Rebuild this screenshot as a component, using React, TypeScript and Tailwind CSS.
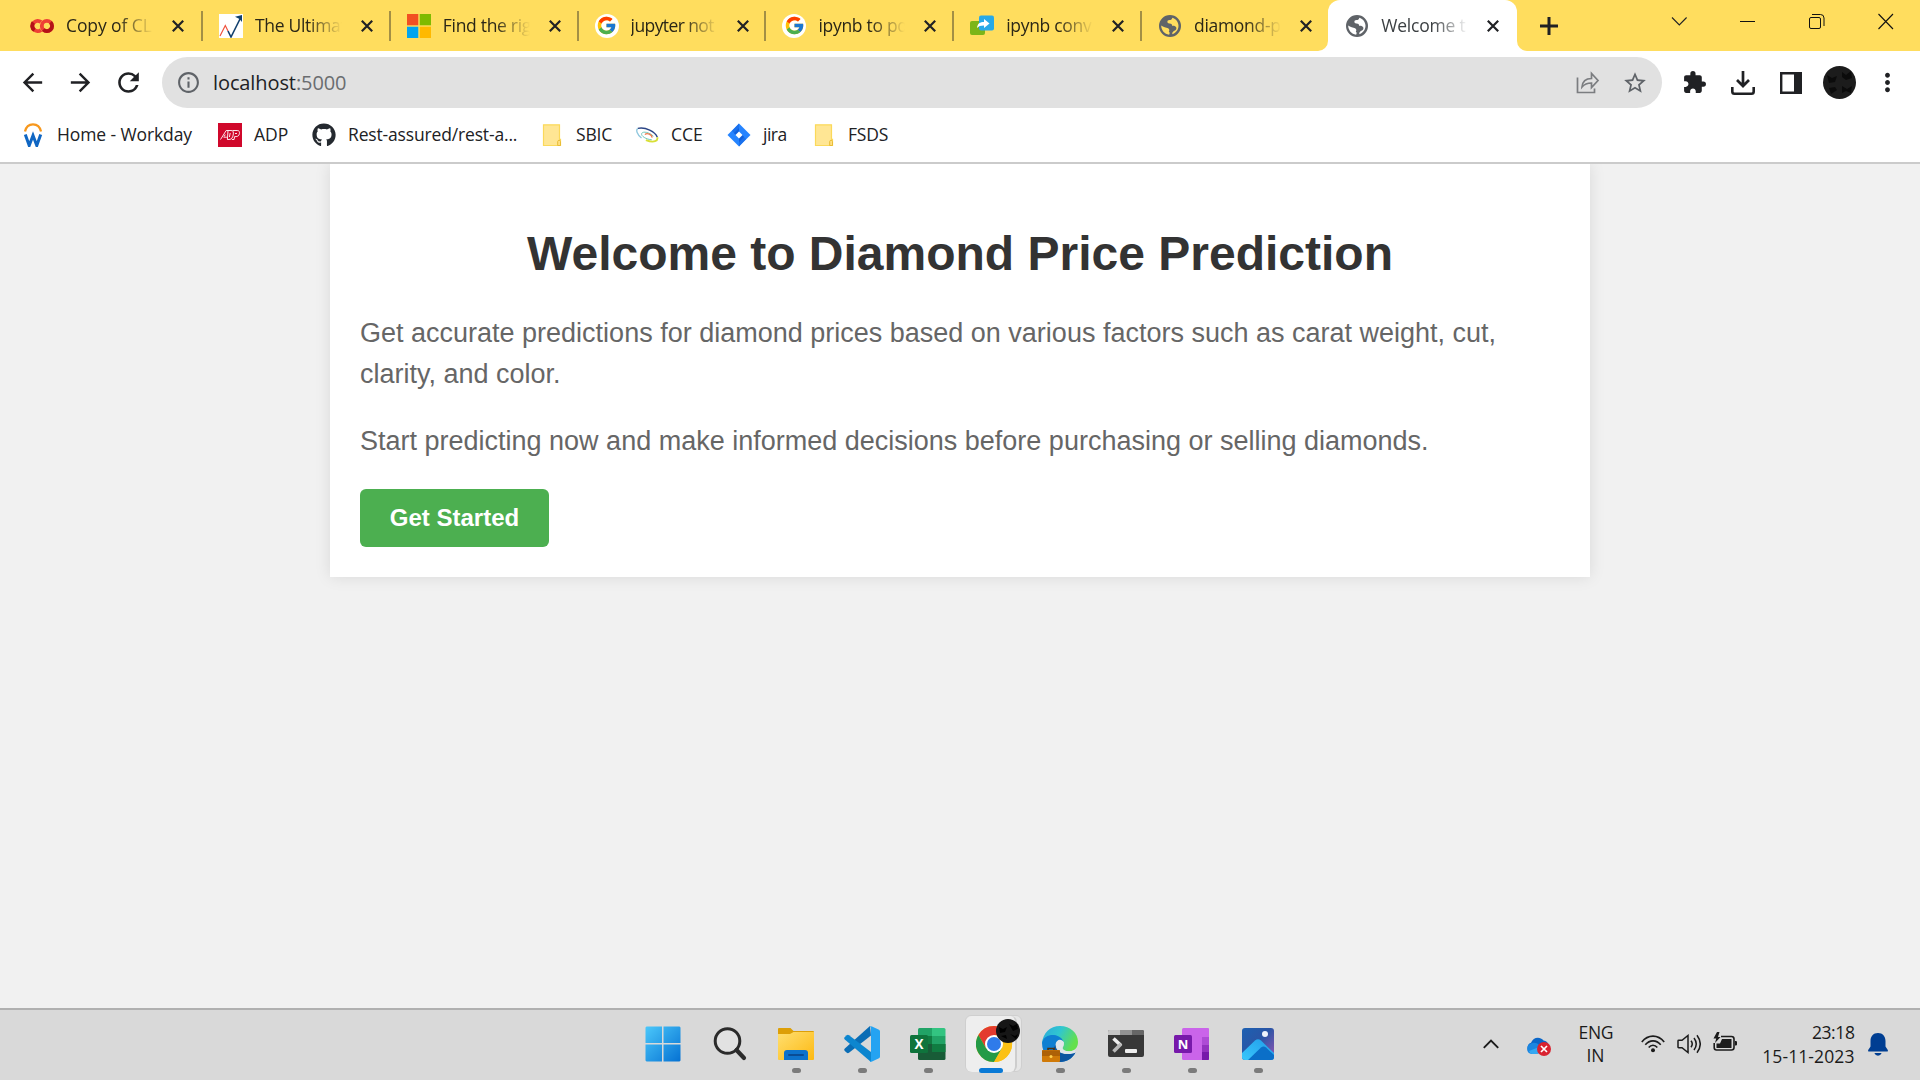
import type { ReactNode } from 'react';
import { FaGithub } from 'react-icons/fa';
import { FcGoogle } from 'react-icons/fc';
import {
  MdArrowBack,
  MdArrowForward,
  MdExtension,
  MdInfoOutline,
  MdMoreVert,
  MdRefresh,
  MdStarBorder,
} from 'react-icons/md';

/* ---------- favicons ---------- */

function ColabIcon() {
  return (
    <svg viewBox="0 0 24 24" className="size-6">
      <g fill="none" strokeWidth="3.900">
        <path d="M11 8.100A5.100 5.100 0 1 0 11 15.900" stroke="#ee4035" />
        <path d="M3.400 8.600A5.100 5.100 0 0 0 4.500 16.200" stroke="#b41217" />
        <circle cx="16.900" cy="12" r="5.100" stroke="#ee4035" />
        <path d="M20.500 8.300A5.100 5.100 0 0 1 13.300 15.600" stroke="#b41217" />
      </g>
    </svg>
  );
}

function TrendIcon() {
  return (
    <svg viewBox="0 0 24 24" className="size-6">
      <path d="M0 0h24v24H0z" fill="#fff" />
      <path d="M1 22L6.300 11.500 9 17" fill="none" stroke="#f0523d" strokeWidth="1.200" />
      <path d="M9 17l3 6L21.500 4" fill="none" stroke="#12406e" strokeWidth="1.600" />
      <path d="M16 2.800L23 1v7l-2.500-3z" fill="#12406e" />
    </svg>
  );
}

function MicrosoftIcon() {
  return (
    <svg viewBox="0 0 24 24" className="size-6">
      <path d="M0 0h11.300v11.300H0z" fill="#f25022" />
      <path d="M12.700 0H24v11.300H12.700z" fill="#7fba00" />
      <path d="M0 12.700h11.300V24H0z" fill="#00a4ef" />
      <path d="M12.700 12.700H24V24H12.700z" fill="#ffb900" />
    </svg>
  );
}

function GoogleIcon() {
  return (
    <span className="flex size-6 items-center justify-center rounded-full bg-white">
      <FcGoogle className="size-[21px]" />
    </span>
  );
}

function ConvertIcon() {
  return (
    <svg viewBox="0 0 24 24" className="size-6">
      <rect x="0" y="7" width="15" height="14" rx="2" fill="#7cb518" />
      <rect x="9" y="1.500" width="15" height="15" rx="2" fill="#27a9e8" />
      <path d="M7 14c.5-4.500 3-6 7-6V5l5.500 4.500L14 14v-2.500c-3.500 0-5.500.8-7 2.500z" fill="#fff" />
    </svg>
  );
}

function GlobeIcon() {
  return (
    <svg viewBox="0 0 24 24" className="size-6">
      <path
        fillRule="evenodd"
        fill="#5f6368"
        d="M12 1a11 11 0 1 1 0 22 11 11 0 0 1 0-22zM14.300 3.700c-.2 1.500-1.200 2.300-2.800 2.400-1.500.1-2.200.8-2.100 2 .1 1 .8 1.400 2.200 1.300 1.800 0 2.400.8 2.500 2.300 1.900-.2 3.600.2 4.200 1.700.4 1.100-.2 2.400-1.400 3.200-1.400.9-2.600 1-2.700 3.700 3.700-1.200 6.300-4.500 6.300-8.500 0-3.700-2.500-7-6.200-8.100zM3.200 11.500c0 4.700 3.400 8.600 7.900 9.200.8-1.200.7-2.300-.3-3.200.9-1.100.6-2.500-.7-3.300-1.900-1-4.800-.7-6.900-2.700z"
      />
    </svg>
  );
}

/* ---------- bookmark icons ---------- */

function WorkdayIcon() {
  return (
    <svg viewBox="0 0 24 24" className="size-6">
      <path d="M4 8.500C5 4 8 1.300 12 1.300S19 4 20 8.500" fill="none" stroke="#f7981d" strokeWidth="2.300" />
      <path d="M4.300 11.500L8.200 22.500 12 12.500l3.800 10 3.900-11" fill="none" stroke="#0f66c3" strokeWidth="3" />
    </svg>
  );
}

function AdpIcon() {
  return (
    <svg viewBox="0 0 24 24" className="size-6">
      <path d="M0 0h24v24H0z" fill="#d0082b" />
      <g fill="none" stroke="#fff" strokeWidth=".9">
        <path d="M2.500 16.500L8.200 7.500h1.800l-.6 9M5.500 14.200h3.400M7.200 11.500l-1 2" />
        <path d="M10 7.500h3c2.300 0 2.700 1.700 2.200 4.500s-1.900 4.500-4.200 4.500h-1.700M12.200 10l-.8 4" />
        <path d="M14.500 7.500h4.700c2 0 2.600 1.300 2.200 3.200s-1.500 2.900-3.300 2.900h-1.500l-.5 2.900h-2.300M17 10.500h2" />
      </g>
    </svg>
  );
}

function FolderIcon() {
  return (
    <svg viewBox="0 0 24 24" className="size-6">
      <path d="M3.500 1.800h16v14.500h1V22.500H3.500z" fill="#ffe694" stroke="#fbd95a" strokeWidth="1.200" />
      <path d="M17.700 22.500v-4c0-1.600 2.800-1.600 2.800 0v4z" fill="#ffe083" stroke="#e9bc36" strokeWidth="1" />
    </svg>
  );
}

function CceIcon() {
  return (
    <svg viewBox="0 0 24 24" className="size-6">
      <g fill="none" transform="rotate(18 12 12)">
        <path d="M22.500 11C19 6.500 8 4.500 1.200 8.600" stroke="#2b4586" strokeWidth="1.400" />
        <path d="M1.200 8.600c-1.500 2 .5 5.500 6.500 7.900" stroke="#8fc7de" strokeWidth="1.300" />
        <path d="M22.500 11c2 3-1 6.700-10 6.200" stroke="#d8df36" strokeWidth="1.800" />
        <path d="M18 15c-5 1.500-12 0-11.500-3 .5-2.500 7-3.500 12-.8" stroke="#62bfb1" strokeWidth=".8" />
        <path d="M17.500 13c-.5-3-6.500-3.500-7.500-.7" stroke="#ee7d50" strokeWidth="1.400" />
      </g>
    </svg>
  );
}

function JiraIcon() {
  return (
    <svg viewBox="0 0 24 24" className="size-6">
      <path d="M12 .5L23.500 12 12 23.500.5 12z" fill="#2684ff" />
      <path d="M12 .5V9l-3 3-4-4zM12 23.500V15l3-3 4 4z" fill="#1a70ec" />
      <path d="M12 5v4l-3 3-2-2zM12 19v-4l3-3 2 2z" fill="#0f5fdc" />
      <path d="M12 8.500l3.500 3.500-3.500 3.500L8.500 12z" fill="#fff" />
    </svg>
  );
}

/* ---------- tab strip ---------- */

function CloseGlyph() {
  return (
    <svg viewBox="0 0 12 12" className="size-3 shrink-0">
      <path d="M.8.8l10.400 10.400M11.200.8L.8 11.200" stroke="#202124" strokeWidth="2.200" />
    </svg>
  );
}

type TabData = { title: string; icon: ReactNode; tracking: string };

const tabs: TabData[] = [
  { title: 'The Ultimat', icon: <TrendIcon />, tracking: 'tracking-[-0.3px]' },
  { title: 'Find the rig', icon: <MicrosoftIcon />, tracking: 'tracking-[-0.3px]' },
  { title: 'jupyter not', icon: <GoogleIcon />, tracking: 'tracking-[-0.6px]' },
  { title: 'ipynb to pd', icon: <GoogleIcon />, tracking: 'tracking-[-0.3px]' },
  { title: 'ipynb conv', icon: <ConvertIcon />, tracking: 'tracking-[-0.3px]' },
  { title: 'diamond-p', icon: <GlobeIcon />, tracking: 'tracking-[-0.3px]' },
];

function TabBody({ title, icon, tracking }: TabData) {
  return (
    <>
      <span className="mr-3 size-6 shrink-0">{icon}</span>
      <span
        className={`w-[87px] shrink-0 overflow-hidden whitespace-nowrap mask-r-from-60% mask-r-to-100% ${tracking}`}
      >
        {title}
      </span>
      <span className="ml-[19px] flex shrink-0">
        <CloseGlyph />
      </span>
    </>
  );
}

function TabStrip() {
  return (
    <div className="flex h-[51px] bg-[#ffdd5e] text-[17.5px] text-[#2b2717]">
      <div className="flex w-[201px] items-center pl-[30px]">
        <TabBody title="Copy of CL" icon={<ColabIcon />} tracking="tracking-[-0.1px]" />
      </div>
      {tabs.map((tab) => (
        <div key={tab.title} className="flex w-[187.800px] items-center">
          <span className="mt-px h-[30px] w-[2px] bg-[#a38f45]" />
          <div className="flex items-center pl-4">
            <TabBody {...tab} />
          </div>
        </div>
      ))}
      <div className="flex items-end">
        <svg viewBox="0 0 10 10" className="-ml-2.5 size-2.5">
          <path d="M10 0v10H0A10 10 0 0 0 10 0z" fill="#fff" />
        </svg>
      </div>
      <div className="flex h-full w-[189px] items-center rounded-t-[12px] bg-white pl-[17.500px] text-[#3c4043]">
        <TabBody title="Welcome t" icon={<GlobeIcon />} tracking="tracking-[-0.2px]" />
      </div>
      <div className="flex items-end">
        <svg viewBox="0 0 10 10" className="size-2.5">
          <path d="M0 0v10h10A10 10 0 0 1 0 0z" fill="#fff" />
        </svg>
      </div>
      <svg viewBox="0 0 18 18" className="mt-[16.500px] ml-[13.500px] size-[18px]">
        <path d="M9 0v18M0 9h18" stroke="#202124" strokeWidth="3" />
      </svg>
      <div className="-mr-px ml-auto flex">
        <svg viewBox="0 0 69 43" className="h-[43px] w-[69px]">
          <path d="M27 17.500l7.300 7.500 7.300-7.500" fill="none" stroke="#202124" strokeWidth="1.100" />
        </svg>
        <svg viewBox="0 0 69 43" className="h-[43px] w-[69px]" shapeRendering="crispEdges">
          <path d="M26 21.500h15" stroke="#111" />
        </svg>
        <svg viewBox="0 0 69 43" className="h-[43px] w-[69px]">
          <rect x="26.500" y="17.500" width="11" height="11" rx="1.500" fill="none" stroke="#111" />
          <path d="M29 14.500h8.500a3.500 3.500 0 0 1 3.500 3.500v8" fill="none" stroke="#111" />
        </svg>
        <svg viewBox="0 0 69 43" className="h-[43px] w-[69px]">
          <path d="M26.500 14l14.500 15M41 14L26.500 29" stroke="#111" strokeWidth="1.100" />
        </svg>
      </div>
    </div>
  );
}

/* ---------- toolbar ---------- */

function Toolbar() {
  return (
    <div className="flex h-[57px] items-center pt-1.5 text-[#202124]">
      <MdArrowBack className="ml-[18px] size-[29px]" />
      <MdArrowForward className="ml-[19px] size-[29px]" />
      <MdRefresh className="ml-[18px] size-[31px]" />
      <div className="ml-[18px] flex h-[51px] w-[1500px] items-center rounded-full bg-[#e1e1e1]">
        <MdInfoOutline className="ml-[14px] size-[25px] text-[#5f6368]" />
        <span className="ml-[12px] text-[20px] tracking-[-0.1px]">
          localhost<span className="text-[#6a6d70]">:5000</span>
        </span>
        <svg
          viewBox="0 0 26 26"
          className="mr-[22px] ml-auto size-[26px]"
          fill="none"
          stroke="#7b7d80"
          strokeWidth="1.700"
        >
          <path d="M3.500 7.500v15h17v-4" />
          <path d="M8 17c.5-6 4-8.500 9.500-8.500V3.500l6.500 7-6.500 7V13c-4.500 0-7 1-9.500 4z" />
        </svg>
        <MdStarBorder className="mr-[14px] size-[26px] text-[#5f6368]" />
      </div>
      <MdExtension className="ml-[20px] size-[25px]" />
      <svg viewBox="0 0 24 24" className="ml-[24px] size-6" fill="none" stroke="#202124">
        <path d="M12 0v15M6 9l6 6 6-6" strokeWidth="2.700" />
        <path d="M1.300 16v4.500q0 2.200 2.200 2.200h17q2.200 0 2.200-2.200V16" strokeWidth="2.600" />
      </svg>
      <svg viewBox="0 0 22 22" className="ml-[25px] size-[22px]">
        <path d="M1.200 1.200h19.600v19.600H1.200z" fill="#fff" stroke="#202124" strokeWidth="2.400" />
        <path d="M14 0h8v22h-8z" fill="#202124" />
      </svg>
      <svg viewBox="0 0 33 33" className="ml-[21px] size-[33px]">
        <circle cx="16.500" cy="16.500" r="16.500" fill="#1c1c1c" />
        <path
          d="M4 9l5 3 5-2-2 6-6 1zM19 6l4 3 5-4 1 7-6 2-4-3zM6 22l6-1 2 3-6 4zM19 20l5 3 5-3-1 7-5-2-4 2z"
          fill="#0b0b0b"
        />
      </svg>
      <MdMoreVert className="ml-[16.500px] size-[29px]" />
    </div>
  );
}

/* ---------- bookmarks ---------- */

function Bookmark({ icon, children }: { icon: ReactNode; children: ReactNode }) {
  return (
    <div className="flex items-center gap-3 whitespace-nowrap">
      <span className="size-6">{icon}</span>
      {children}
    </div>
  );
}

function Bookmarks() {
  return (
    <div className="flex h-[56px] items-center border-b-2 border-[#cbcbcb] pl-[21px] text-[17.5px] text-[#202124]">
      <Bookmark icon={<WorkdayIcon />}>
        <span className="-mt-px w-[161px] tracking-[-0.1px]">Home - Workday</span>
      </Bookmark>
      <Bookmark icon={<AdpIcon />}>
        <span className="-mt-px w-[58px]">ADP</span>
      </Bookmark>
      <Bookmark icon={<FaGithub className="size-6 text-[#24292f]" />}>
        <span className="-mt-px w-[192px] tracking-[-0.16px]">Rest-assured/rest-a...</span>
      </Bookmark>
      <Bookmark icon={<FolderIcon />}>
        <span className="-mt-px w-[59px] tracking-[-0.2px]">SBIC</span>
      </Bookmark>
      <Bookmark icon={<CceIcon />}>
        <span className="-mt-px w-[56px]">CCE</span>
      </Bookmark>
      <Bookmark icon={<JiraIcon />}>
        <span className="-mt-px w-[49px] tracking-[-0.5px]">jira</span>
      </Bookmark>
      <Bookmark icon={<FolderIcon />}>
        <span className="-mt-px tracking-[-0.2px]">FSDS</span>
      </Bookmark>
    </div>
  );
}

/* ---------- page ---------- */

function Page() {
  return (
    <div className="h-[844px] overflow-hidden bg-[#f1f1f1] font-['Liberation_Sans',sans-serif]">
      <div className="mx-auto h-[413px] w-[1260px] bg-white px-[30px] pt-[63px] shadow-[0_0_15px_rgba(0,0,0,0.1)]">
        <h1 className="text-center text-[48px] leading-[54px] font-bold text-[#333]">
          Welcome to Diamond Price Prediction
        </h1>
        <p className="mt-8 text-[27px] leading-[40.500px] font-normal text-[#666]">
          Get accurate predictions for diamond prices based on various factors such as carat weight, cut, clarity, and
          color.
        </p>
        <p className="mt-[27px] text-[27px] leading-[40.500px] font-normal text-[#666]">
          Start predicting now and make informed decisions before purchasing or selling diamonds.
        </p>
        <button className="mt-[27px] flex h-[58px] w-[189px] items-center justify-center rounded-[6px] bg-[#4caf50] text-2xl font-bold text-white">
          Get Started
        </button>
      </div>
    </div>
  );
}

/* ---------- taskbar ---------- */

function StartIcon() {
  return (
    <svg viewBox="0 0 36 36" className="ml-px size-9">
      <defs>
        <linearGradient id="start" x1="0" y1="0" x2="36" y2="36" gradientUnits="userSpaceOnUse">
          <stop stopColor="#4cc9fb" />
          <stop offset="1" stopColor="#0470d2" />
        </linearGradient>
      </defs>
      <path
        d="M1.500.5h15.500v16.500H.5V1.500zM18.500.5h16l1 1V17h-17zM.5 18.500h16.500v17H1.500l-1-1zM18.500 18.500h17v16l-1 1h-16z"
        fill="url(#start)"
      />
    </svg>
  );
}

function SearchIcon() {
  return (
    <svg viewBox="0 0 36 36" className="ml-1 size-9" fill="none" stroke="#2b2b2b">
      <circle cx="15.500" cy="15" r="12.300" strokeWidth="3" fill="#e2e2e2" />
      <path d="M24.500 24l7.500 8" strokeWidth="4.200" strokeLinecap="round" />
    </svg>
  );
}

function ExplorerIcon() {
  return (
    <svg viewBox="0 0 36 36" className="size-9">
      <defs>
        <linearGradient id="folder" x1="0" y1="0" x2="1" y2="1">
          <stop stopColor="#ffdf70" />
          <stop offset="1" stopColor="#fdb912" />
        </linearGradient>
      </defs>
      <path d="M0 3q0-1 1-1h11.500l3 3H35q1 0 1 1v10H0z" fill="#dd9f07" />
      <path d="M0 8h12l3.500-2H36v27q0 1-1 1H1q-1 0-1-1z" fill="url(#folder)" />
      <path d="M6 34v-7q0-3 3-3h18q3 0 3 3v7z" fill="#0d72cb" />
      <path d="M11 29h14" stroke="#0a4c94" strokeWidth="2" strokeLinecap="round" />
    </svg>
  );
}

function VsCodeIcon() {
  return (
    <svg viewBox="0 0 36 36" className="size-9">
      <path d="M26 0L.8 22.500q-1.200 1.300 0 2.500l2 1.800q1 .8 2.200 0L27 9.500z" fill="#0a6db5" />
      <path d="M27 36L.8 13.500q-1.200-1.300 0-2.500l2-1.800q1-.8 2.200 0L27 26z" fill="#0d86cf" />
      <path d="M26 .3Q27 0 28 .5l7 3.300q1 .5 1 1.700v25q0 1.200-1 1.700l-7 3.400q-1 .5-2 .2l1-1.500V2z" fill="#24a3f2" />
    </svg>
  );
}

function ExcelIcon() {
  return (
    <svg viewBox="0 0 36 36" className="size-9">
      <path d="M8 3.500Q8 2 9.500 2H22v8H8z" fill="#21a366" />
      <path d="M22 2h12q1.500 0 1.500 1.500V10H22z" fill="#33c481" />
      <path d="M8 10h14v8H8z" fill="#107c41" />
      <path d="M22 10h13.500v8H22z" fill="#21a366" />
      <path d="M8 18h27.500v14.500q0 1.500-1.500 1.500H9.500Q8 34 8 32.500z" fill="#185c37" />
      <path d="M22 18h13.500v8H22z" fill="#107c41" />
      <rect y="9" width="18" height="18" rx="1.500" fill="#0f743c" />
      <text x="9" y="22.800" textAnchor="middle" fontSize="13.500" fontWeight="700" fill="#fff">
        X
      </text>
    </svg>
  );
}

function ChromeIcon() {
  return (
    <svg viewBox="0 0 48 44" className="ml-3 h-11 w-12">
      <g transform="translate(0 8)">
        <circle cx="18" cy="18" r="18" fill="#fbc116" />
        <path d="M2.400 9A18 18 0 0 1 33.600 9L18 10 10.200 22.500z" fill="#e33b2e" />
        <path d="M2.400 9A18 18 0 0 0 18 36l7.800-13.500L18 18l-7.800 4.500z" fill="#249a47" />
        <path d="M33.600 9H18l7.800 13.500L18 36A18 18 0 0 0 33.600 9z" fill="#fbc116" />
        <circle cx="18" cy="18" r="9" fill="#fff" />
        <circle cx="18" cy="18" r="7" fill="#2f7bea" />
      </g>
      <circle cx="32" cy="13" r="12" fill="#161616" />
      <path d="M23 9l4 2 4-2-2 5-5 1zM33 6l4 2 4-2 1 5-5 2zM25 18l5-1 1 4zM34 16l5 2 3-2-2 5z" fill="#000" />
    </svg>
  );
}

function EdgeIcon() {
  return (
    <svg viewBox="0 0 36 36" className="size-9">
      <defs>
        <linearGradient id="edge" x1="0" y1="0" x2="1" y2=".4">
          <stop stopColor="#2aa8dc" />
          <stop offset=".5" stopColor="#30c6d0" />
          <stop offset="1" stopColor="#63e04d" />
        </linearGradient>
      </defs>
      <path
        d="M0 17C1 7 8 0 18 0c10.500 0 18 7 18 16 0 6-4 9.500-9.500 9.500-4.500 0-6.500-2-6-3.500 2-2.500 2-6-1.500-7.500z"
        fill="url(#edge)"
      />
      <path
        d="M0 17C1 11 7 8.500 12 9c5 .5 9.500 4 9.500 8-2-3.500-8-3-8 2 0 7.500 9 12 20 7.500C30 32.500 25 36 18 36 8 36 0 28 0 17z"
        fill="#0f7fd2"
      />
      <path d="M13.500 19c0 7.500 9 11.500 20 7.500C30 32.500 25 36 18 36c-5-1-9-7-7-13z" fill="#0c55a0" />
      <path d="M14 18c0-5 6-6 8-1.500 0 2.500-1.500 4-1.500 5.500.5 3 6.500 4.500 12.500 2l.5 2.500C24 30.500 14 26 14 18z" fill="#e0e6ea" />
      <rect y="24" width="18" height="12" rx="1" fill="#d07a08" />
      <path d="M0 24.500h18V30H0z" fill="#ad6107" />
      <path d="M6 24v-1.500h6V24" fill="none" stroke="#4c2f10" strokeWidth="1.500" />
      <circle cx="9" cy="30.500" r="1.500" fill="#ffcf4d" />
    </svg>
  );
}

function TerminalIcon() {
  return (
    <svg viewBox="0 0 36 36" className="size-9">
      <rect y="4" width="36" height="27" rx="2" fill="#383838" />
      <path d="M0 9V5.500Q0 4 1.500 4H12v5z" fill="#c6c6c6" />
      <path d="M12 4h12v5H12z" fill="#929292" />
      <path d="M24 4h10.500Q36 4 36 5.500V9H24z" fill="#666" />
      <path d="M5.500 12.500l7.500 7" stroke="#eee" strokeWidth="3.600" />
      <path d="M13 18l-7.500 7.500" stroke="#b9b9b9" strokeWidth="3.600" />
      <rect x="17" y="23" width="12" height="4" rx="1" fill="#eee" />
    </svg>
  );
}

function OneNoteIcon() {
  return (
    <svg viewBox="0 0 36 36" className="size-9">
      <path d="M8 3.500Q8 2 9.500 2H34q1 0 1 1v31H9.500Q8 34 8 32.500z" fill="#ca64ea" />
      <path d="M28 11h7v8h-7z" fill="#ae4bd5" />
      <path d="M28 19h7v7h-7z" fill="#9332bf" />
      <path d="M28 26h7v7q0 1-1 1h-6z" fill="#7719aa" />
      <rect y="9" width="18" height="18" rx="1.500" fill="#7719aa" />
      <text x="9" y="22.800" textAnchor="middle" fontSize="13" fontWeight="700" fill="#fff">
        N
      </text>
    </svg>
  );
}

function PhotosIcon() {
  return (
    <svg viewBox="0 0 36 36" className="size-9">
      <defs>
        <linearGradient id="sky" x1="0" y1="0" x2="1" y2=".9">
          <stop stopColor="#1b62b4" />
          <stop offset=".5" stopColor="#2a55a5" />
          <stop offset="1" stopColor="#9a55b4" />
        </linearGradient>
        <linearGradient id="hill" x1="0" y1="1" x2="1" y2="0">
          <stop stopColor="#3ccbfd" />
          <stop offset="1" stopColor="#1f9ae8" />
        </linearGradient>
        <clipPath id="photo">
          <rect x="2" y="2" width="32" height="32" rx="3" />
        </clipPath>
      </defs>
      <g clipPath="url(#photo)">
        <path d="M0 0h36v36H0z" fill="url(#sky)" />
        <path d="M0 29L15 14.500q3-2.500 6 0L36 29v7H0z" fill="url(#hill)" />
        <path d="M6 36l15-14.500q2.500-2 5 0L36 31v5z" fill="#0b6fc8" />
      </g>
      <circle cx="25" cy="8" r="3" fill="#eef3fb" />
    </svg>
  );
}

function TaskItem({ icon, running = false }: { icon: ReactNode; running?: boolean }) {
  return (
    <div className="flex h-full w-[66px] flex-col items-center pt-4">
      {icon}
      {running && <span className="mt-1.5 h-[5px] w-[9px] rounded-full bg-[#7b7b7b]" />}
    </div>
  );
}

function Taskbar() {
  return (
    <div className="flex h-[72px] border-t-2 border-[#b0b0b0] bg-[#d9d9d9] text-[17.5px] text-[#1b1b1b]">
      <div className="flex pl-[629px]">
        <div className="mr-0.5 flex">
          <TaskItem icon={<StartIcon />} />
          <TaskItem icon={<SearchIcon />} />
        </div>
        <TaskItem icon={<ExplorerIcon />} running />
        <TaskItem icon={<VsCodeIcon />} running />
        <TaskItem icon={<ExcelIcon />} running />
        <div className="flex w-[66px] pt-[5px] pl-[4px]">
          <div className="h-[57px] w-[57px] rounded-[6px] border border-[#cfcfcf] bg-[#e6e6e6]">
            <div className="flex h-[56px] w-[51px] flex-col items-center rounded-[6px] border-r-2 border-[#cdcdcd] bg-[#eee]">
              <div className="flex pl-1.5 pt-[2px]">
                <ChromeIcon />
              </div>
              <span className="mt-[6px] h-[5px] w-6 shrink-0 rounded-full bg-[#0a7ad6]" />
            </div>
          </div>
        </div>
        <TaskItem icon={<EdgeIcon />} running />
        <TaskItem icon={<TerminalIcon />} running />
        <TaskItem icon={<OneNoteIcon />} running />
        <TaskItem icon={<PhotosIcon />} running />
      </div>
      <div className="ml-auto flex items-center pb-0.5">
        <svg viewBox="0 0 16 10" className="size-4">
          <path d="M.8 8.800L8 1.500l7.200 7.300" fill="none" stroke="#1b1b1b" strokeWidth="1.900" />
        </svg>
        <svg viewBox="0 0 24 20" className="mt-1 ml-7 h-5 w-6">
          <path d="M5 16.500a5 5 0 0 1-1-9.700C6 1 13 0 16.500 4.500c3 .3 4.500 2 5 4.500L11 16.500z" fill="#0a66c8" />
          <path d="M4 7.500c3-1.500 6-.5 8 1.500l4 3-5 6H5C-1.500 17.500-1.300 9 4 7.500z" fill="#1b86e0" />
          <path d="M2 15l9-3.500V18H5q-2 0-3-3z" fill="#35a8f2" />
          <circle cx="17" cy="13" r="7" fill="#d92230" />
          <path d="M14 10l6 6M20 10l-6 6" stroke="#fff" strokeWidth="1.700" />
        </svg>
        <div className="ml-7 w-[34px] text-center leading-[23px]">
          <div className="tracking-[-0.3px]">ENG</div>
          <div>IN</div>
        </div>
        <svg viewBox="0 0 24 18" className="ml-[28px] h-[18px] w-6" fill="none" stroke="#1b1b1b" strokeWidth="1.600">
          <path d="M.8 7C7-.8 17-.8 23.200 7M4.300 9.800c4.300-5.300 11.100-5.300 15.400 0M7.700 12.500c2.400-3 6.200-3 8.600 0" />
          <circle cx="12" cy="15.300" r="2" fill="#1b1b1b" stroke="none" />
        </svg>
        <svg viewBox="0 0 24 20" className="ml-3 h-5 w-6" fill="none" stroke="#1b1b1b" strokeWidth="1.500">
          <path d="M1 7q0-.7.7-.7H5L11 1.500v17L5 13.700H1.700q-.7 0-.7-.7zM14 6.800q2.500 3.200 0 6.400M17 4q4.500 6 0 12M20 1.200q6.500 8.800 0 17.600" />
        </svg>
        <svg viewBox="0 0 24 20" className="mb-1 ml-3 h-5 w-6">
          <path
            d="M8 4.500h10.500Q21 4.500 21 7v8.500q0 2.500-2.500 2.500H3.500Q1.200 18 1.200 15.500V11"
            fill="none"
            stroke="#1b1b1b"
            strokeWidth="1.600"
          />
          <path d="M9 7h9.500v9H3.500v-4.500H7z" fill="#1b1b1b" />
          <path d="M22 9h.8q1.200 0 1.200 1v2.500q0 1-1.200 1H22z" fill="#1b1b1b" />
          <path d="M4 0L.5 6.500h2.700L2 11l5.500-6H5L6.500 0z" fill="#1b1b1b" />
        </svg>
        <div className="ml-[25px] w-[93px] text-right leading-6">
          <div className="tracking-[-0.4px]">23:18</div>
          <div className="tracking-[0.1px]">15-11-2023</div>
        </div>
        <svg viewBox="0 0 20 23" className="mr-8 ml-[13.500px] h-[23px] w-5" fill="#003e92">
          <path d="M10 0c4.700 0 7.500 3.500 7.500 8v5.500L19.800 17q.4 1.500-.8 1.500H1Q-.2 18.500.2 17l2.300-3.500V8C2.500 3.500 5.300 0 10 0zM6.300 20h7.400Q12.500 22.700 10 22.700T6.300 20z" />
        </svg>
      </div>
    </div>
  );
}

export default function App() {
  return (
    <div className="h-[1080px] w-[1920px] overflow-hidden bg-white font-['Open_Sans',sans-serif] font-normal">
      <TabStrip />
      <Toolbar />
      <Bookmarks />
      <Page />
      <Taskbar />
    </div>
  );
}
